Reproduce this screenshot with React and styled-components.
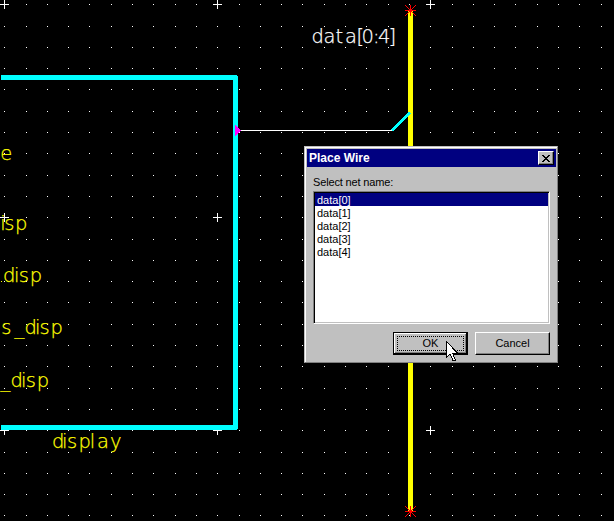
import React from "react";
import styled, { createGlobalStyle } from "styled-components";

const Global = createGlobalStyle`
  body { margin: 0; background: #000; overflow: hidden; }
  * { box-sizing: border-box; }
`;

const Screen = styled.main`
  position: relative;
  width: 614px;
  height: 521px;
  overflow: hidden;
  background: #000;
`;

const Schematic = styled.svg`
  display: block;
`;

const NetText = styled.text`
  font-family: "DejaVu Sans", sans-serif;
  font-weight: 200;
  font-size: 19.5px;
  fill: ${(p) => p.$color || "#ff0"};
  stroke: ${(p) => p.$color || "#ff0"};
  stroke-width: 0.25px;
  white-space: pre;
`;

const Dialog = styled.section`
  position: absolute;
  left: 304px;
  top: 146px;
  width: 254px;
  height: 217px;
  display: flex;
  flex-direction: column;
  padding: 1px;
  background: #c0c0c0;
  border: 1px solid;
  border-color: #c0c0c0 #808080 #808080 #c0c0c0;
  box-shadow: inset 1px 1px 0 #fff;
  font-family: "Liberation Sans", Arial, sans-serif;
  font-size: 11px;
  color: #000;
`;

const TitleBar = styled.header`
  display: flex;
  align-items: center;
  justify-content: space-between;
  flex: none;
  height: 18px;
  margin: 1px 0 0 1px;
  padding: 0 2px;
  background: #000080;
`;

const Title = styled.h1`
  margin: 0;
  color: #fff;
  font: bold 12px/17px "Liberation Sans", Arial, sans-serif;
`;

const CloseButton = styled.button`
  display: grid;
  place-items: center;
  width: 16px;
  height: 14px;
  padding: 0;
  border: 1px solid;
  border-color: #fff #000 #000 #fff;
  background: #c0c0c0;
  box-shadow: inset -1px -1px 0 #808080;
`;

const Body = styled.div`
  display: flex;
  flex-direction: column;
  flex: 1;
  padding: 8px 6px 7px 7px;
`;

const Label = styled.label`
  height: 16px;
  line-height: 14px;
  letter-spacing: -0.15px;
`;

const ListBox = styled.ul`
  width: 237px;
  height: 133px;
  margin: 0;
  padding: 1px;
  list-style: none;
  background: #fff;
  border: 1px solid;
  border-color: #808080 #fff #fff #808080;
  box-shadow: inset 1px 1px 0 #000, inset -1px -1px 0 #c0c0c0;
`;

const Item = styled.li`
  height: 13px;
  padding-left: 2px;
  line-height: 14px;
  background: ${(p) => (p.$selected ? "#000080" : "#fff")};
  color: ${(p) => (p.$selected ? "#fff" : "#000")};
`;

const Actions = styled.footer`
  display: flex;
  justify-content: flex-end;
  gap: 7px;
  margin-top: 8px;
`;

const Button = styled.button`
  display: flex;
  width: 75px;
  height: 23px;
  padding: 2px;
  border: 1px solid;
  border-color: ${(p) => (p.$default ? "#000" : "#fff #000 #000 #fff")};
  background: #c0c0c0;
  box-shadow: ${(p) =>
    p.$default
      ? "inset -1px -1px 0 #000, inset 1px 1px 0 #fff, inset -2px -2px 0 #808080"
      : "inset -1px -1px 0 #808080"};
  font: inherit;
  color: #000;
`;

const ButtonText = styled.span`
  flex: 1;
  margin: ${(p) => (p.$focused ? "1px" : "0")};
  border: ${(p) => (p.$focused ? "1px dotted #000" : "1px solid transparent")};
  text-align: center;
  line-height: ${(p) => (p.$focused ? "12px" : "15px")};
`;

const Pointer = styled.svg`
  position: absolute;
  left: 446px;
  top: 341px;
`;

const gridAt = (k) => Math.round(4.2 + 21.3 * k);
const steps = Array.from({ length: 29 }, (_, k) => gridAt(k));
const crosses = [4, 217, 430];
const nets = ["data[0]", "data[1]", "data[2]", "data[3]", "data[4]"];

const dots = steps
  .flatMap((y) => steps.map((x) => `M${x} ${y}h1v1h-1z`))
  .join("");
const marks = crosses
  .flatMap((y) => crosses.map((x) => `M${x - 4} ${y}h9v1h-9zM${x} ${y - 4}h1v9h-1z`))
  .join("");

const Junction = ({ x, y }) => (
  <g stroke="#f00" fill="none" shapeRendering="crispEdges">
    <path d={`M${x - 5} ${y + 0.5}h11M${x + 0.5} ${y - 5}v11`} />
    <path d={`M${x - 5} ${y - 5}l11 11M${x + 6} ${y - 5}l-11 11`} />
    <circle cx={x + 0.5} cy={y + 0.5} r="1.5" fill="#f00" />
  </g>
);

export default function App() {
  return (
    <Screen>
      <Global />
      <Schematic width="614" height="521" viewBox="0 0 614 521">
        <path d={dots} fill="#fff" shapeRendering="crispEdges" />
        <path d={marks} fill="#fff" shapeRendering="crispEdges" />
        <g shapeRendering="crispEdges">
          <path d="M1 75h236v1h1v353h-1v1H1v-5h232V80H1z" fill="#0ff" />
          <path d="M241 130h151v1H241z" fill="#fff" />
          <path d="M235 125l6 5v1l-6 5z" fill="#f0f" />
          <path d="M408 10h5v502h-5z" fill="#ff0" />
          <path d="M392 130.500l18-18" stroke="#0ff" strokeWidth="3" />
          <path d="M1 281h1v1H1z" fill="#ff0" />
        </g>
        <Junction x={410} y={10} />
        <Junction x={410} y={511} />
        <NetText $color="#fff" x="311.500 323.500 335.500 345 356.500 361.500 373 378 388.500" y="43">data[0:4]</NetText>
        <NetText x="0.200" y="160">e</NetText>
        <NetText x="0.300 4.300 15" y="230">isp</NetText>
        <NetText x="3 14 18.700 29.700" y="282">disp</NetText>
        <NetText x="1.200 14.500 24.500 35 39.500 50.500" y="334">s_disp</NetText>
        <NetText x="0.500 10.500 21 25.700 36.700" y="387">_disp</NetText>
        <NetText x="52 62 67 78.500 89.700 97 110" y="448">display</NetText>
      </Schematic>
      <Dialog>
        <TitleBar>
          <Title>Place Wire</Title>
          <CloseButton aria-label="Close">
            <svg width="8" height="7" viewBox="0 0 8 7" shapeRendering="crispEdges">
              <path d="M0 0h2v1h1v1h2V1h1V0h2v1H7v1H6v1H5v1h1v1h1v1h1v1H6V6H5V5H3v1H2v1H0V6h1V5h1V4h1V3H2V2H1V1H0z" />
            </svg>
          </CloseButton>
        </TitleBar>
        <Body>
          <Label>Select net name:</Label>
          <ListBox>
            {nets.map((net, i) => (
              <Item key={net} $selected={i === 0}>{net}</Item>
            ))}
          </ListBox>
          <Actions>
            <Button $default><ButtonText $focused>OK</ButtonText></Button>
            <Button><ButtonText>Cancel</ButtonText></Button>
          </Actions>
        </Body>
      </Dialog>
      <Pointer width="13" height="21" viewBox="0 0 13 21" shapeRendering="crispEdges">
        <path d="M.5.5v16l3.500-3.500 3 6.500h2.500l-3-7.500h5z" fill="#fff" stroke="#000" />
      </Pointer>
    </Screen>
  );
}
